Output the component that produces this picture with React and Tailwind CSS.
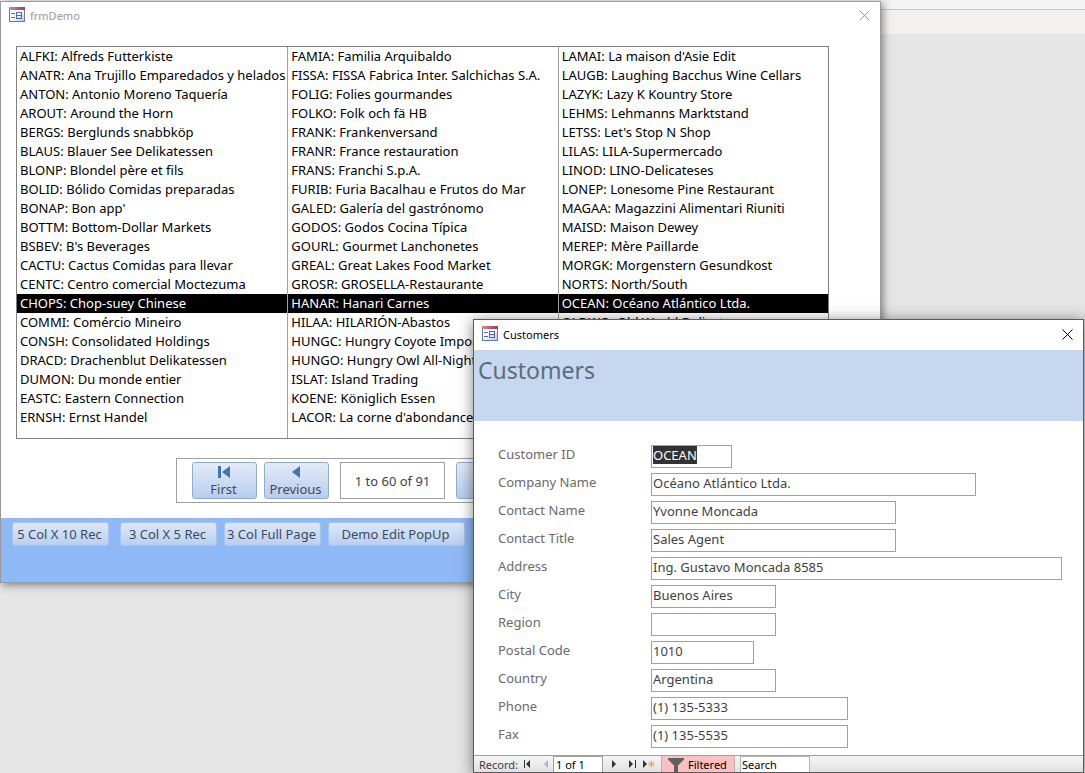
import React, { useEffect, useRef, useState } from 'react';

const COLUMNS = [
  [
    'ALFKI: Alfreds Futterkiste',
    'ANATR: Ana Trujillo Emparedados y helados',
    'ANTON: Antonio Moreno Taquería',
    'AROUT: Around the Horn',
    'BERGS: Berglunds snabbköp',
    'BLAUS: Blauer See Delikatessen',
    'BLONP: Blondel père et fils',
    'BOLID: Bólido Comidas preparadas',
    "BONAP: Bon app'",
    'BOTTM: Bottom-Dollar Markets',
    "BSBEV: B's Beverages",
    'CACTU: Cactus Comidas para llevar',
    'CENTC: Centro comercial Moctezuma',
    'CHOPS: Chop-suey Chinese',
    'COMMI: Comércio Mineiro',
    'CONSH: Consolidated Holdings',
    'DRACD: Drachenblut Delikatessen',
    'DUMON: Du monde entier',
    'EASTC: Eastern Connection',
    'ERNSH: Ernst Handel',
  ],
  [
    'FAMIA: Familia Arquibaldo',
    'FISSA: FISSA Fabrica Inter. Salchichas S.A.',
    'FOLIG: Folies gourmandes',
    'FOLKO: Folk och fä HB',
    'FRANK: Frankenversand',
    'FRANR: France restauration',
    'FRANS: Franchi S.p.A.',
    'FURIB: Furia Bacalhau e Frutos do Mar',
    'GALED: Galería del gastrónomo',
    'GODOS: Godos Cocina Típica',
    'GOURL: Gourmet Lanchonetes',
    'GREAL: Great Lakes Food Market',
    'GROSR: GROSELLA-Restaurante',
    'HANAR: Hanari Carnes',
    'HILAA: HILARIÓN-Abastos',
    'HUNGC: Hungry Coyote Import Store',
    'HUNGO: Hungry Owl All-Night Grocers',
    'ISLAT: Island Trading',
    'KOENE: Königlich Essen',
    "LACOR: La corne d'abondance",
  ],
  [
    "LAMAI: La maison d'Asie Edit",
    'LAUGB: Laughing Bacchus Wine Cellars',
    'LAZYK: Lazy K Kountry Store',
    'LEHMS: Lehmanns Marktstand',
    "LETSS: Let's Stop N Shop",
    'LILAS: LILA-Supermercado',
    'LINOD: LINO-Delicateses',
    'LONEP: Lonesome Pine Restaurant',
    'MAGAA: Magazzini Alimentari Riuniti',
    'MAISD: Maison Dewey',
    'MEREP: Mère Paillarde',
    'MORGK: Morgenstern Gesundkost',
    'NORTS: North/South',
    'OCEAN: Océano Atlántico Ltda.',
    'OLDWO: Old World Delicatessen',
    'OTTIK: Ottilies Käseladen',
    'PARIS: Paris spécialités',
    'PERIC: Pericles Comidas clásicas',
    'PICCO: Piccolo und mehr',
    'PRINI: Princesa Isabel Vinhos',
  ],
];

const FIELDS = [
  { id: 'customerId', label: 'Customer ID', value: 'OCEAN', width: 'w-[81px]' },
  { id: 'companyName', label: 'Company Name', value: 'Océano Atlántico Ltda.', width: 'w-[325px]' },
  { id: 'contactName', label: 'Contact Name', value: 'Yvonne Moncada', width: 'w-[245px]' },
  { id: 'contactTitle', label: 'Contact Title', value: 'Sales Agent', width: 'w-[245px]' },
  { id: 'address', label: 'Address', value: 'Ing. Gustavo Moncada 8585', width: 'w-[411px]' },
  { id: 'city', label: 'City', value: 'Buenos Aires', width: 'w-[125px]' },
  { id: 'region', label: 'Region', value: '', width: 'w-[125px]' },
  { id: 'postalCode', label: 'Postal Code', value: '1010', width: 'w-[103px]' },
  { id: 'country', label: 'Country', value: 'Argentina', width: 'w-[125px]' },
  { id: 'phone', label: 'Phone', value: '(1) 135-5333', width: 'w-[197px]' },
  { id: 'fax', label: 'Fax', value: '(1) 135-5535', width: 'w-[197px]' },
];

const FormIcon = () => (
  <svg width="16" height="15" viewBox="0 0 16 15" shapeRendering="crispEdges" aria-hidden="true">
    <defs>
      <linearGradient id="formBody" x1="0" y1="0" x2="1" y2="1">
        <stop offset="0.4" stopColor="#ffffff" />
        <stop offset="1" stopColor="#b9c6ea" />
      </linearGradient>
      <linearGradient id="formCaption" x1="0" y1="0" x2="1" y2="0">
        <stop offset="0" stopColor="#d9879b" />
        <stop offset="1" stopColor="#9c3a5c" />
      </linearGradient>
    </defs>
    <rect width="16" height="15" fill="#6478b4" />
    <rect x="1" y="3" width="14" height="11" fill="url(#formBody)" />
    <rect width="16" height="3" fill="url(#formCaption)" />
    <path d="M2 6h4v1H2zM2 10h4v1H2z" fill="#5368a8" />
    <path d="M7 5h6v7H7zM8 6v2h4V6zM8 9v2h4V9z" fillRule="evenodd" fill="#5368a8" />
  </svg>
);

const CloseIcon = () => (
  <svg width="11" height="11" viewBox="0 0 11 11" stroke="currentColor" fill="none" aria-hidden="true">
    <path d="M.5 .5l10 10M10.5 .5l-10 10" />
  </svg>
);

const PagerIcon = ({ bar, flip }) => (
  <svg width="14" height="12" viewBox="0 0 14 12" fill="#3f76b0" aria-hidden="true" className={flip ? '-scale-x-100' : ''}>
    {bar && <path d="M1 0h3v12H1z" />}
    {bar ? <path d="M13 0v12L5 6z" /> : <path d="M11 0v12L3 6z" />}
  </svg>
);

const TitleBar = ({ title, className }) => (
  <div className={`flex items-start pl-2 pr-[10px] ${className}`}>
    <FormIcon />
    <h2 className="ml-[5px] mt-px grow text-[11px] leading-4">{title}</h2>
    <button type="button" aria-label={`Close ${title}`} className="mt-[3px]">
      <CloseIcon />
    </button>
  </div>
);

const PagerButton = ({ label, bar, flip }) => (
  <button
    type="button"
    className="flex h-[37px] w-[65px] flex-col items-center justify-between rounded-[3px] border border-[#8fabd0] bg-linear-to-b from-[#e3ebf8] to-[#b9cdee] pr-[2px] pt-[3px] text-[13px] leading-[17px] text-[#3d4a5e]"
  >
    <PagerIcon bar={bar} flip={flip} />
    {label}
  </button>
);

const FooterButton = ({ label, className }) => (
  <button
    type="button"
    className={`h-[24px] whitespace-nowrap rounded-[3px] border border-[#a9c4ee] bg-linear-to-b from-[#dde8f8] to-[#b9cff1] pr-[2px] text-[13px] leading-5 text-[#3d4a5e] ${className}`}
  >
    {label}
  </button>
);

const DemoWindow = () => {
  const [selectedRow, setSelectedRow] = useState(13);

  return (
    <section className="absolute left-0 right-[204px] top-px border border-[#9b9b9b] bg-white shadow-[2px_2px_8px_rgba(0,0,0,0.45)]">
      <TitleBar title="frmDemo" className="h-[29px] pt-[5px] text-[#9a9a9a]" />

      <div className="mb-[19px] ml-[15px] mr-[51px] mt-[15px] grid grid-cols-3 border border-[#808080] text-[13px] leading-[19px] text-black">
        {COLUMNS.map((rows, col) => (
          <ul key={rows[0]} className={`min-w-0 pb-[11px] ${col ? 'border-l border-[#a0a0a0]' : ''}`}>
            {rows.map((row, i) => (
              <li key={row}>
                <button
                  type="button"
                  aria-pressed={i === selectedRow}
                  onClick={() => setSelectedRow(i)}
                  className={`block h-[19px] w-full overflow-hidden whitespace-nowrap pl-[3px] text-left ${i === selectedRow ? 'bg-black text-white' : ''}`}
                >
                  {row}
                </button>
              </li>
            ))}
          </ul>
        ))}
      </div>

      <div className="mb-[15px] ml-[175px] flex h-[45px] w-fit items-center border border-[#a0a0a0] px-[15px]">
        <PagerButton label="First" bar />
        <div className="ml-[7px]">
          <PagerButton label="Previous" />
        </div>
        <output className="mx-[11px] flex h-[37px] w-[105px] items-center justify-center border border-[#a0a0a0] pt-[2px] text-[13px] text-[#3f3f3f]">
          1 to 60 of 91
        </output>
        <PagerButton label="Next" flip />
        <div className="ml-[7px]">
          <PagerButton label="Last" bar flip />
        </div>
      </div>

      <div className="flex h-[64px] items-start bg-[#8fb9f6] pl-[11px] pt-1">
        <FooterButton label="5 Col X 10 Rec" className="w-[97px]" />
        <FooterButton label="3 Col X 5 Rec" className="ml-[11px] w-[97px]" />
        <FooterButton label="3 Col Full Page" className="ml-[7px] w-[97px]" />
        <FooterButton label="Demo Edit PopUp" className="ml-[7px] w-[137px]" />
      </div>
    </section>
  );
};

const RecordBar = () => (
  <div className="flex h-[17px] items-stretch border-t border-[#a0a0a0] bg-linear-to-b from-[#f6f6f8] to-[#e1e1e4] pl-[5px] text-[11px] leading-4 text-black">
    <span className="w-[44px] pt-px text-[#3f3f3f]">Record:</span>
    <button type="button" aria-label="First record" className="flex w-4 items-center">
      <svg width="8" height="8" viewBox="0 0 8 8" fill="#333"><path d="M1 0h1v8H1zM7 0v8L3 4z" /></svg>
    </button>
    <button type="button" aria-label="Previous record" className="flex w-[14px] items-center justify-center">
      <svg width="4" height="8" viewBox="0 0 4 8" fill="#b5b5b5"><path d="M4 0v8L0 4z" /></svg>
    </button>
    <input aria-label="Current record" defaultValue="1 of 1" className="w-[50px] border border-b-0 border-[#a0a0a0] bg-white pl-[2px]" />
    <button type="button" aria-label="Next record" className="ml-[9px] flex w-[17px] items-center">
      <svg width="4" height="8" viewBox="0 0 4 8" fill="#333"><path d="M0 0v8l4-4z" /></svg>
    </button>
    <button type="button" aria-label="Last record" className="flex w-[14px] items-center">
      <svg width="7" height="8" viewBox="0 0 7 8" fill="#333"><path d="M0 0v8l4-4zM6 0h1v8H6z" /></svg>
    </button>
    <button type="button" aria-label="New record" className="flex w-[18px] items-center">
      <svg width="12" height="8" viewBox="0 0 12 8">
        <path d="M0 0v8l4-4z" fill="#333" />
        <path d="M8.500 .5v7M5 4h7M6 1.500l5 5M11 1.500l-5 5" stroke="#e5a94f" fill="none" />
      </svg>
    </button>
    <button type="button" className="flex w-[74px] items-center gap-1 border-x border-[#b5b5b5] bg-[#fdbfc0] pl-[6px] pt-px">
      <svg width="16" height="15" viewBox="0 0 16 15" fill="#5f5f5f" aria-hidden="true">
        <path d="M0 1h16v1.500L10 8.500V15H6V8.500L0 2.500z" />
      </svg>
      Filtered
    </button>
    <input aria-label="Search records" defaultValue="Search" className="ml-[5px] w-[70px] border border-b-0 border-[#b5b5b5] bg-white pl-px" />
  </div>
);

const CustomersWindow = () => {
  const idRef = useRef(null);

  useEffect(() => {
    idRef.current?.focus();
    idRef.current?.select();
  }, []);

  return (
    <section className="absolute left-[473px] right-px top-[319px] border border-[#5a5a5a] bg-white shadow-[0_2px_14px_rgba(0,0,0,0.5)]">
      <TitleBar title="Customers" className="h-[30px] pt-[6px] text-black" />
      <header className="h-[71px] bg-[#c6d8ef] px-1 pt-1">
        <h1 className="text-[23px] leading-8 text-[#5f6b78]">Customers</h1>
      </header>

      <form className="flex flex-col gap-[5px] pb-[7px] pl-6 pt-6 text-[13px]">
        {FIELDS.map((field, i) => (
          <div key={field.id} className="flex h-[23px]">
            <label htmlFor={field.id} className="w-[153px] shrink-0 leading-[19px] text-[#6a6a6a]">
              {field.label}
            </label>
            <input
              id={field.id}
              ref={i === 0 ? idRef : null}
              defaultValue={field.value}
              className={`h-[23px] border border-[#a0a0a0] bg-white pb-1 pl-px leading-[19px] text-[#3f3f3f] outline-none selection:bg-[#333] selection:text-white ${field.width}`}
            />
          </div>
        ))}
      </form>

      <RecordBar />
    </section>
  );
};

const App = () => (
  <main className="relative min-h-screen overflow-hidden bg-[#e5e5e5] font-['Noto_Sans',sans-serif]">
    {/* Lower edge of the ribbon behind the windows */}
    <div className="h-[10px] border-b border-[#c8c8c8] bg-[#f3f3f3]" />
    <div className="h-6 bg-[#f2f1ef]" />
    <DemoWindow />
    <CustomersWindow />
  </main>
);

export default App;
